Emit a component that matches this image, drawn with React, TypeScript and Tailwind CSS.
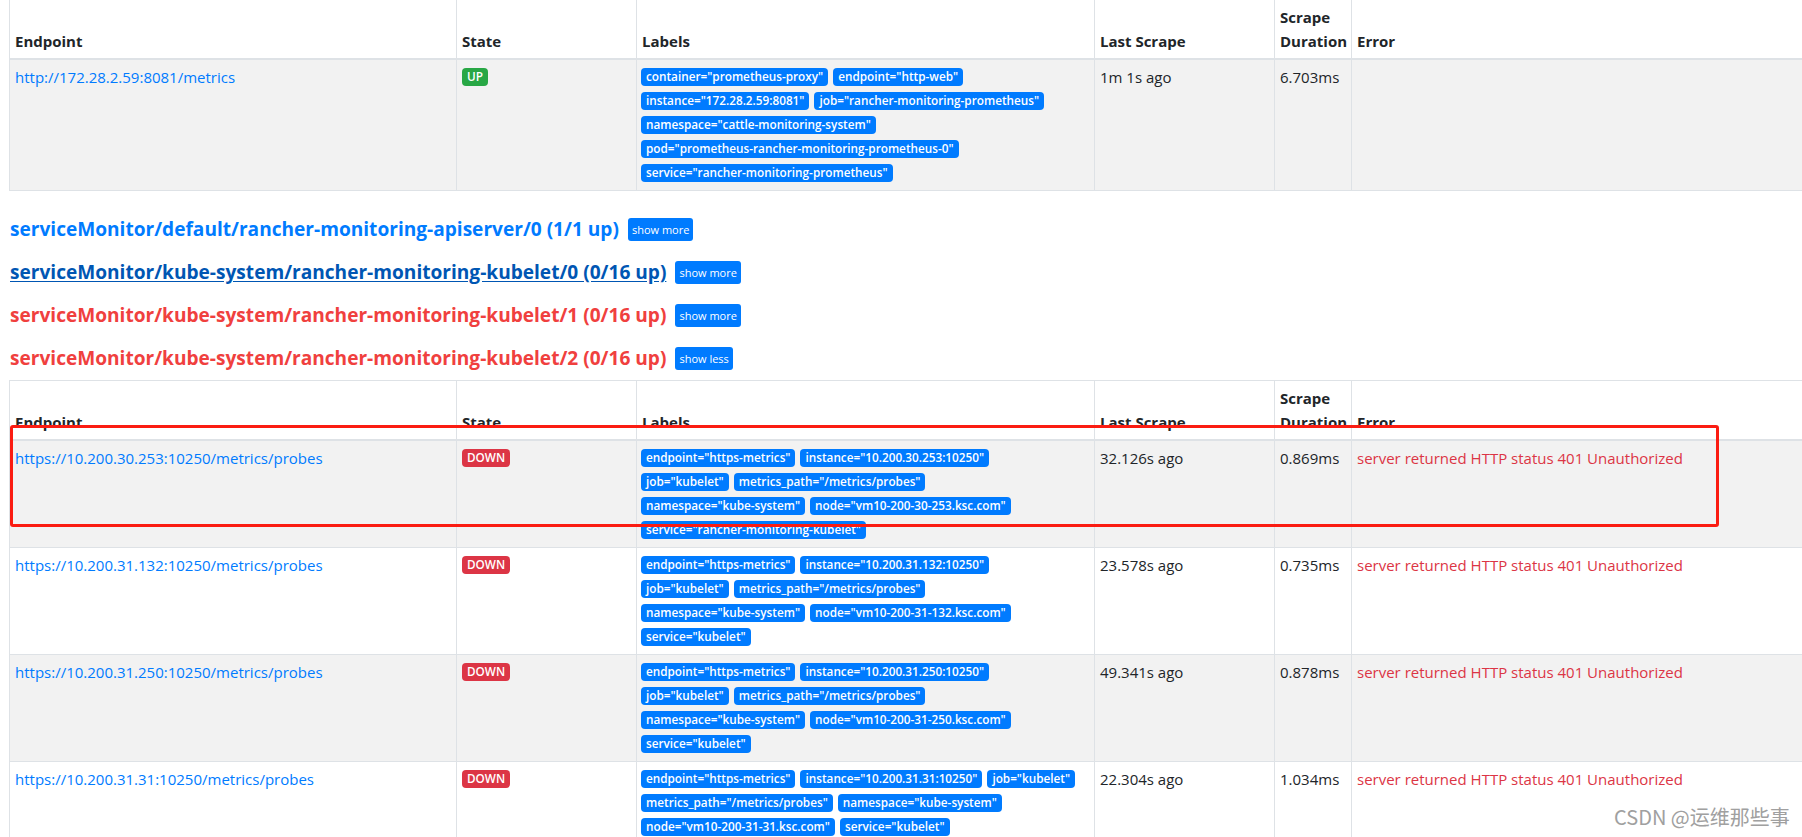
import React from "react";

type Target = {
  endpoint: string;
  state: "UP" | "DOWN";
  labels: string[][];
  lastScrape: string;
  duration: string;
  error?: string;
};

const apiTargets: Target[] = [
  {
    endpoint: "http://172.28.2.59:8081/metrics",
    state: "UP",
    labels: [
      ['container="prometheus-proxy"', 'endpoint="http-web"'],
      ['instance="172.28.2.59:8081"', 'job="rancher-monitoring-prometheus"'],
      ['namespace="cattle-monitoring-system"'],
      ['pod="prometheus-rancher-monitoring-prometheus-0"'],
      ['service="rancher-monitoring-prometheus"'],
    ],
    lastScrape: "1m 1s ago",
    duration: "6.703ms",
  },
];

const err = "server returned HTTP status 401 Unauthorized";

const kubeletTargets: Target[] = [
  {
    endpoint: "https://10.200.30.253:10250/metrics/probes",
    state: "DOWN",
    labels: [
      ['endpoint="https-metrics"', 'instance="10.200.30.253:10250"'],
      ['job="kubelet"', 'metrics_path="/metrics/probes"'],
      ['namespace="kube-system"', 'node="vm10-200-30-253.ksc.com"'],
      ['service="rancher-monitoring-kubelet"'],
    ],
    lastScrape: "32.126s ago",
    duration: "0.869ms",
    error: err,
  },
  {
    endpoint: "https://10.200.31.132:10250/metrics/probes",
    state: "DOWN",
    labels: [
      ['endpoint="https-metrics"', 'instance="10.200.31.132:10250"'],
      ['job="kubelet"', 'metrics_path="/metrics/probes"'],
      ['namespace="kube-system"', 'node="vm10-200-31-132.ksc.com"'],
      ['service="kubelet"'],
    ],
    lastScrape: "23.578s ago",
    duration: "0.735ms",
    error: err,
  },
  {
    endpoint: "https://10.200.31.250:10250/metrics/probes",
    state: "DOWN",
    labels: [
      ['endpoint="https-metrics"', 'instance="10.200.31.250:10250"'],
      ['job="kubelet"', 'metrics_path="/metrics/probes"'],
      ['namespace="kube-system"', 'node="vm10-200-31-250.ksc.com"'],
      ['service="kubelet"'],
    ],
    lastScrape: "49.341s ago",
    duration: "0.878ms",
    error: err,
  },
  {
    endpoint: "https://10.200.31.31:10250/metrics/probes",
    state: "DOWN",
    labels: [
      ['endpoint="https-metrics"', 'instance="10.200.31.31:10250"', 'job="kubelet"'],
      ['metrics_path="/metrics/probes"', 'namespace="kube-system"'],
      ['node="vm10-200-31-31.ksc.com"', 'service="kubelet"'],
    ],
    lastScrape: "22.304s ago",
    duration: "1.034ms",
    error: err,
  },
];

const cell = "border border-[#dee2e6] p-[5px] align-top";
const head = "border border-[#dee2e6] border-b-2 p-[5px] align-bottom text-left font-bold";

function Badge({ text, color }: { text: string; color: string }) {
  return (
    <span
      className={`inline-flex h-[18px] items-center rounded-[4px] px-[5px] text-[11.75px] font-semibold leading-none text-white whitespace-nowrap ${color}`}
    >
      {text}
    </span>
  );
}

function TargetsTable({ targets }: { targets: Target[] }) {
  return (
    <div className="overflow-hidden pl-[9px]">
      <table className="w-[1830px] table-fixed border-collapse text-[15px] leading-6 text-[#212529]">
        <colgroup>
          <col className="w-[447px]" />
          <col className="w-[180px]" />
          <col className="w-[458px]" />
          <col className="w-[180px]" />
          <col className="w-[77px]" />
          <col />
        </colgroup>
        <thead>
          <tr>
            <th className={head}>Endpoint</th>
            <th className={head}>State</th>
            <th className={head}>Labels</th>
            <th className={head}>Last Scrape</th>
            <th className={`${head} whitespace-nowrap`}>
              Scrape
              <br />
              Duration
            </th>
            <th className={head}>Error</th>
          </tr>
        </thead>
        <tbody>
          {targets.map((t, i) => (
            <tr key={t.endpoint} className={i % 2 === 0 ? "bg-[#f2f2f2]" : "bg-white"}>
              <td className={cell}>
                <a className="text-[#007bff]">{t.endpoint}</a>
              </td>
              <td className={cell}>
                <div className="flex h-6 items-center">
                  <Badge text={t.state} color={t.state === "UP" ? "bg-[#28a745]" : "bg-[#dc3545]"} />
                </div>
              </td>
              <td className={`${cell} pl-[4px]`}>
                {t.labels.map((line, j) => (
                  <div key={j} className="flex h-6 items-center gap-[5px]">
                    {line.map((l) => (
                      <Badge key={l} text={l} color="bg-[#007bff]" />
                    ))}
                  </div>
                ))}
              </td>
              <td className={cell}>{t.lastScrape}</td>
              <td className={cell}>{t.duration}</td>
              <td className={`${cell} text-[#dc3545]`}>{t.error}</td>
            </tr>
          ))}
        </tbody>
      </table>
    </div>
  );
}

function PoolHeading({ title, tone, button }: { title: string; tone: string; button: string }) {
  return (
    <div className="flex h-[43px] items-center gap-[9px] pl-[10px]">
      <a className={`text-[19.1px] font-bold leading-none ${tone}`}>{title}</a>
      <button className="h-[23px] rounded-[3px] bg-[#007bff] px-[4px] text-[11px] leading-none text-white">
        {button}
      </button>
    </div>
  );
}

export default function App() {
  return (
    <div className="relative h-[837px] w-[1802px] overflow-hidden bg-white font-['Open_Sans',sans-serif]">
      <div className="-mt-[1px]">
        <TargetsTable targets={apiTargets} />
      </div>

      <div className="mt-[17px]">
        <PoolHeading
          title="serviceMonitor/default/rancher-monitoring-apiserver/0 (1/1 up)"
          tone="text-[#007bff]"
          button="show more"
        />
        <PoolHeading
          title="serviceMonitor/kube-system/rancher-monitoring-kubelet/0 (0/16 up)"
          tone="text-[#0056b3] underline underline-offset-2"
          button="show more"
        />
        <PoolHeading
          title="serviceMonitor/kube-system/rancher-monitoring-kubelet/1 (0/16 up)"
          tone="text-[#f0403e]"
          button="show more"
        />
        <PoolHeading
          title="serviceMonitor/kube-system/rancher-monitoring-kubelet/2 (0/16 up)"
          tone="text-[#f0403e]"
          button="show less"
        />
      </div>

      <TargetsTable targets={kubeletTargets} />

      {/* annotation box drawn over the screenshot */}
      <div className="pointer-events-none absolute left-[10px] top-[425px] h-[102px] w-[1709px] rounded-[3px] border-[3px] border-[#fb1c12]" />

      <div className="absolute left-[1614px] top-[805px] text-[20px] leading-6 text-[#a0a0a0] font-['Noto_Sans_CJK_SC',sans-serif]">
        CSDN @运维那些事
      </div>
    </div>
  );
}
